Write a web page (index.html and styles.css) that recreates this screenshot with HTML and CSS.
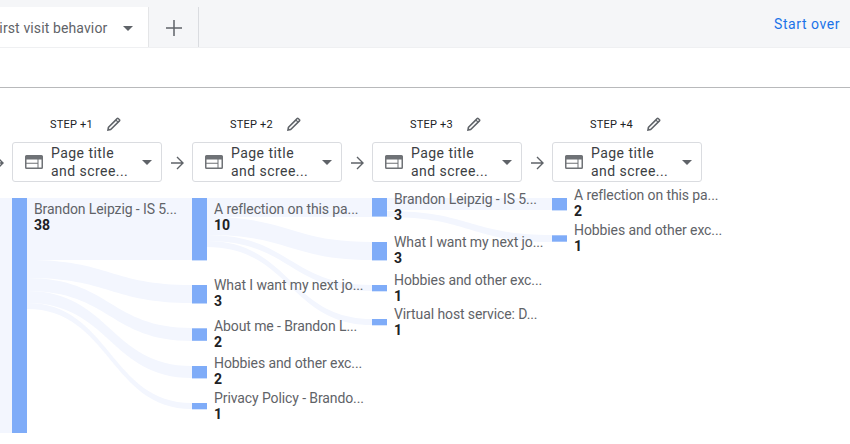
FILE: index.html
```html
<!DOCTYPE html>
<html lang="en">
<head>
<meta charset="utf-8">
<title>First visit behavior</title>
<link rel="stylesheet" href="styles.css">
</head>
<body>
<header class="topbar">
  <div class="tab">
    <span class="tab-name">First visit behavior</span>
    <svg class="tab-caret" width="10" height="5" viewBox="0 0 10 5"><path d="M0 0h10L5 5z"/></svg>
  </div>
  <div class="add-tab">
    <svg width="16" height="16" viewBox="0 0 16 16"><path d="M7.25 0h1.5v7.25H16v1.5H8.75V16h-1.5V8.75H0v-1.5h7.25z"/></svg>
  </div>
  <a class="start-over">Start over</a>
</header>
<div class="subbar"></div>
<section class="steps">
  <div class="arrow-col"><svg width="14" height="14" viewBox="0 0 14 14"><path d="M7 1l6 6-6 6M13 7H1"/></svg></div>
  <div class="step">
    <div class="step-head"><span class="step-name">STEP +1</span><svg class="pencil" width="14" height="14" viewBox="0 0 14 14"><path fill-rule="evenodd" d="M0 14l.7-4L9.600 1a1.500 1.500 0 0 1 2.100 0l1.300 1.300a1.500 1.500 0 0 1 0 2.100L4 13.300zM1.900 12.100l1.500-.4 6.700-6.700-1.100-1.100-6.700 6.700zM9.800 3.100l1.100 1.100 1-1-1.100-1.100z"/></svg></div>
    <div class="picker">
      <svg class="web" width="18" height="14" viewBox="0 0 18 14"><path d="M1.5 0h15A1.5 1.5 0 0 1 18 1.500v11a1.500 1.500 0 0 1-1.500 1.500h-15A1.500 1.500 0 0 1 0 12.500v-11A1.500 1.500 0 0 1 1.500 0zM1.500 4.500v3.300h11v-3.300zM13.500 4.500v8h3v-8zM1.500 8.800v3.700h11V8.800z" fill-rule="evenodd"/></svg>
      <span class="picker-text">Page title<br>and scree...</span>
      <svg class="picker-caret" width="10" height="5" viewBox="0 0 10 5"><path d="M0 0h10L5 5z"/></svg>
    </div>
  </div>
  <div class="arrow-col"><svg width="14" height="14" viewBox="0 0 14 14"><path d="M7 1l6 6-6 6M13 7H1"/></svg></div>
  <div class="step">
    <div class="step-head"><span class="step-name">STEP +2</span><svg class="pencil" width="14" height="14" viewBox="0 0 14 14"><path fill-rule="evenodd" d="M0 14l.7-4L9.600 1a1.500 1.500 0 0 1 2.100 0l1.300 1.300a1.500 1.500 0 0 1 0 2.100L4 13.300zM1.900 12.100l1.500-.4 6.700-6.700-1.100-1.100-6.700 6.700zM9.800 3.100l1.100 1.100 1-1-1.100-1.100z"/></svg></div>
    <div class="picker">
      <svg class="web" width="18" height="14" viewBox="0 0 18 14"><path d="M1.5 0h15A1.5 1.5 0 0 1 18 1.500v11a1.500 1.500 0 0 1-1.500 1.500h-15A1.500 1.500 0 0 1 0 12.500v-11A1.500 1.500 0 0 1 1.500 0zM1.500 4.500v3.300h11v-3.300zM13.500 4.500v8h3v-8zM1.500 8.800v3.700h11V8.800z" fill-rule="evenodd"/></svg>
      <span class="picker-text">Page title<br>and scree...</span>
      <svg class="picker-caret" width="10" height="5" viewBox="0 0 10 5"><path d="M0 0h10L5 5z"/></svg>
    </div>
  </div>
  <div class="arrow-col"><svg width="14" height="14" viewBox="0 0 14 14"><path d="M7 1l6 6-6 6M13 7H1"/></svg></div>
  <div class="step">
    <div class="step-head"><span class="step-name">STEP +3</span><svg class="pencil" width="14" height="14" viewBox="0 0 14 14"><path fill-rule="evenodd" d="M0 14l.7-4L9.600 1a1.500 1.500 0 0 1 2.100 0l1.300 1.300a1.500 1.500 0 0 1 0 2.100L4 13.300zM1.900 12.100l1.500-.4 6.700-6.700-1.100-1.100-6.700 6.700zM9.800 3.100l1.100 1.100 1-1-1.100-1.100z"/></svg></div>
    <div class="picker">
      <svg class="web" width="18" height="14" viewBox="0 0 18 14"><path d="M1.5 0h15A1.5 1.5 0 0 1 18 1.500v11a1.500 1.500 0 0 1-1.500 1.500h-15A1.500 1.500 0 0 1 0 12.500v-11A1.500 1.500 0 0 1 1.500 0zM1.500 4.500v3.300h11v-3.300zM13.500 4.500v8h3v-8zM1.500 8.800v3.700h11V8.800z" fill-rule="evenodd"/></svg>
      <span class="picker-text">Page title<br>and scree...</span>
      <svg class="picker-caret" width="10" height="5" viewBox="0 0 10 5"><path d="M0 0h10L5 5z"/></svg>
    </div>
  </div>
  <div class="arrow-col"><svg width="14" height="14" viewBox="0 0 14 14"><path d="M7 1l6 6-6 6M13 7H1"/></svg></div>
  <div class="step">
    <div class="step-head"><span class="step-name">STEP +4</span><svg class="pencil" width="14" height="14" viewBox="0 0 14 14"><path fill-rule="evenodd" d="M0 14l.7-4L9.600 1a1.500 1.500 0 0 1 2.100 0l1.300 1.300a1.500 1.500 0 0 1 0 2.100L4 13.300zM1.900 12.100l1.500-.4 6.700-6.700-1.100-1.100-6.700 6.700zM9.800 3.100l1.100 1.100 1-1-1.100-1.100z"/></svg></div>
    <div class="picker">
      <svg class="web" width="18" height="14" viewBox="0 0 18 14"><path d="M1.5 0h15A1.5 1.5 0 0 1 18 1.500v11a1.500 1.500 0 0 1-1.500 1.500h-15A1.500 1.500 0 0 1 0 12.500v-11A1.500 1.500 0 0 1 1.500 0zM1.500 4.500v3.300h11v-3.300zM13.500 4.500v8h3v-8zM1.500 8.800v3.700h11V8.800z" fill-rule="evenodd"/></svg>
      <span class="picker-text">Page title<br>and scree...</span>
      <svg class="picker-caret" width="10" height="5" viewBox="0 0 10 5"><path d="M0 0h10L5 5z"/></svg>
    </div>
  </div>
</section>
<section class="sankey">
  <svg class="sankey-art" width="850" height="254" viewBox="0 190 850 254">
    <g class="flows">
      <rect x="0" y="198" width="12" height="235"/>
      <rect x="27" y="198" width="165" height="62"/>
      <path d="M27 260C110 260 110 285 192 285V303C110 303 110 278 27 278Z"/>
      <path d="M27 278C110 278 110 328 192 328V341C110 341 110 291 27 291Z"/>
      <path d="M27 291C110 291 110 366 192 366V378C110 378 110 303 27 303Z"/>
      <path d="M27 303C110 303 110 403 192 403V409C110 409 110 309 27 309Z"/>
      <rect x="207" y="198" width="165" height="19"/>
      <path d="M207 217C290 217 290 242 372 242V260C290 260 290 235 207 235Z"/>
      <path d="M207 235C290 235 290 285 372 285V291C290 291 290 241 207 241Z"/>
      <path d="M207 241C290 241 290 319 372 319V325C290 325 290 247 207 247Z"/>
      <rect x="387" y="198" width="165" height="12"/>
      <path d="M387 211C470 211 470 235 552 235V242C470 242 470 217 387 217Z"/>
    </g>
    <g class="bars">
      <rect x="12" y="198" width="15" height="235"/>
      <rect x="192" y="198" width="15" height="62.400"/>
      <rect x="192" y="285" width="15" height="18.500"/>
      <rect x="192" y="328.300" width="15" height="12.500"/>
      <rect x="192" y="366" width="15" height="12.400"/>
      <rect x="192" y="403" width="15" height="6.300"/>
      <rect x="372" y="198" width="15" height="18.600"/>
      <rect x="372" y="242" width="15" height="18.400"/>
      <rect x="372" y="285" width="15" height="6.300"/>
      <rect x="372" y="319" width="15" height="6.300"/>
      <rect x="552" y="198" width="15" height="12.400"/>
      <rect x="552" y="235.300" width="15" height="6.400"/>
    </g>
  </svg>
  <div class="node" style="left:34px;top:11px"><span class="node-name">Brandon Leipzig - IS 5...</span><b class="node-count">38</b></div>
  <div class="node" style="left:214px;top:11px"><span class="node-name">A reflection on this pa...</span><b class="node-count">10</b></div>
  <div class="node" style="left:214px;top:87px"><span class="node-name">What I want my next jo...</span><b class="node-count">3</b></div>
  <div class="node" style="left:214px;top:128px"><span class="node-name">About me - Brandon L...</span><b class="node-count">2</b></div>
  <div class="node" style="left:214px;top:165px"><span class="node-name">Hobbies and other exc...</span><b class="node-count">2</b></div>
  <div class="node" style="left:214px;top:200px"><span class="node-name">Privacy Policy - Brando...</span><b class="node-count">1</b></div>
  <div class="node" style="left:394px;top:1px"><span class="node-name">Brandon Leipzig - IS 5...</span><b class="node-count">3</b></div>
  <div class="node" style="left:394px;top:44px"><span class="node-name">What I want my next jo...</span><b class="node-count">3</b></div>
  <div class="node" style="left:394px;top:82px"><span class="node-name">Hobbies and other exc...</span><b class="node-count">1</b></div>
  <div class="node" style="left:394px;top:116px"><span class="node-name">Virtual host service: D...</span><b class="node-count">1</b></div>
  <div class="node" style="left:574px;top:-3px"><span class="node-name">A reflection on this pa...</span><b class="node-count">2</b></div>
  <div class="node" style="left:574px;top:32px"><span class="node-name">Hobbies and other exc...</span><b class="node-count">1</b></div>
</section>
</body>
</html>
```
FILE: styles.css
```css
* { box-sizing: border-box; }
html, body { height: 100%; }
body {
  margin: 0;
  background: #fff;
  font-family: Roboto, "Liberation Sans", sans-serif;
  overflow: hidden;
}
.topbar {
  display: flex;
  align-items: stretch;
  height: 48px;
  padding-top: 7px;
  background: #f5f6f8;
  border-bottom: 1px solid #eff0f2;
}
.tab {
  display: flex;
  align-items: center;
  justify-content: space-between;
  width: 182px;
  margin-left: -33px;
  padding: 2px 15px 0 24.500px;
  background: #fff;
  border-right: 1px solid #e4e5e7;
}
.tab-name {
  font-size: 14px;
  color: #5f6368;
  letter-spacing: .12px;
  white-space: nowrap;
}
.tab-caret { fill: #5f6368; }
.add-tab {
  display: flex;
  align-items: center;
  justify-content: center;
  width: 50px;
  padding-top: 2px;
  border-right: 1px solid #dadce0;
}
.add-tab svg { fill: #5f6368; }
.start-over {
  margin-left: auto;
  padding: 9px 10px 0 0;
  font-size: 14px;
  letter-spacing: .55px;
  color: #1a73e8;
}
.subbar {
  height: 40px;
  border-bottom: 1px solid #b8b9bb;
}
.steps {
  display: flex;
  margin-left: -18px;
  padding-top: 26px;
  height: 102px;
}
.arrow-col {
  display: flex;
  justify-content: center;
  width: 30px;
  padding-top: 42px;
  flex: none;
}
.arrow-col svg { fill: none; stroke: #5f6368; stroke-width: 1.4; }
.step { width: 150px; flex: none; }
.step-head {
  display: flex;
  align-items: center;
  height: 20px;
  padding-left: 38px;
  margin-bottom: 8px;
}
.step-name {
  width: 57px;
  font-size: 11px;
  color: #202124;
  letter-spacing: .2px;
  white-space: nowrap;
}
.pencil { fill: #5f6368; }
.picker {
  display: flex;
  align-items: center;
  height: 40px;
  padding-left: 12px;
  padding-right: 9px;
  border: 1px solid #dadce0;
  border-radius: 3px;
}
.web { fill: #6f7276; flex: none; }
.picker-text {
  margin-left: 8px;
  font-size: 14px;
  line-height: 18px;
  letter-spacing: .45px;
  color: #3c4043;
  white-space: nowrap;
}
.picker-caret { fill: #5f6368; margin-left: auto; }
.sankey {
  position: relative;
  height: 254px;
}
.sankey-art { position: absolute; left: 0; top: 0; display: block; }
.flows { fill: #f3f6fe; }
.bars { fill: #7facf8; }
.node {
  position: absolute;
  display: flex;
  flex-direction: column;
  white-space: nowrap;
}
.node-name {
  font-size: 14px;
  line-height: 16px;
  letter-spacing: -.1px;
  color: #5f6368;
}
.node-count {
  font-size: 14px;
  line-height: 16px;
  font-weight: 700;
  color: #202124;
}
```
